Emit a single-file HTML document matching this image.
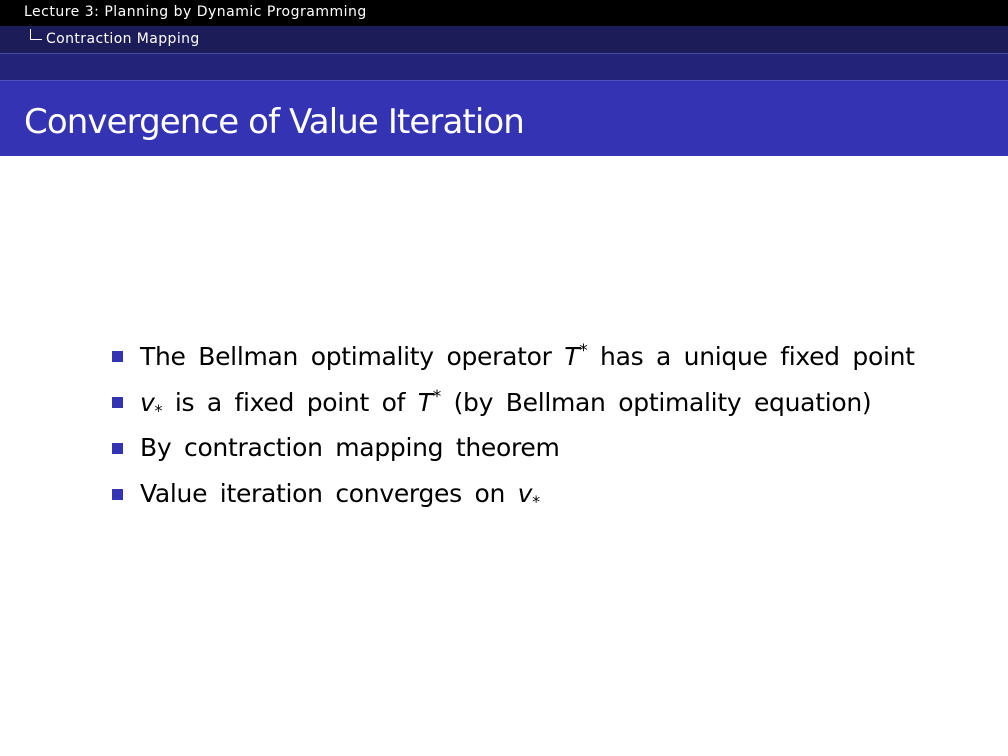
<!DOCTYPE html>
<html><head><style>
body{margin:0;width:1008px;height:756px;background:#fff;font-family:"DejaVu Sans","Liberation Sans",sans-serif;position:relative;overflow:hidden}
.a{position:absolute;left:0;width:1008px}
.t{position:absolute;white-space:nowrap}
.b{position:absolute;left:112px;width:11px;height:11px;background:#3333b3}
.l{position:absolute;left:140px;font-size:25px;color:#000;white-space:nowrap;letter-spacing:-0.3px;word-spacing:5px}
i{font-style:italic}
sup{font-size:17px;vertical-align:9px}
sub{font-size:16px;vertical-align:-5px}
</style></head><body>
<div class="a" style="top:0;height:26px;background:#000"></div>
<div class="a" style="top:26px;height:27px;background:#1c1c58"></div>
<div class="a" style="top:53px;height:1px;background:#4a4aa0"></div>
<div class="a" style="top:54px;height:26px;background:#23237a"></div>
<div class="a" style="top:80px;height:1px;background:#5050c0"></div>
<div class="a" style="top:81px;height:75px;background:#3333b3"></div>
<div class="t" style="left:24px;top:4px;font-size:14px;color:#fff;letter-spacing:0.5px">Lecture 3: Planning by Dynamic Programming</div>
<div style="position:absolute;left:30px;top:29px;width:11px;height:10px;border-left:1px solid #fff;border-bottom:1px solid #fff"></div>
<div class="t" style="left:46px;top:31px;font-size:14px;color:#fff;letter-spacing:0.4px">Contraction Mapping</div>
<div class="t" style="left:24px;top:102px;font-size:34px;color:#fff;letter-spacing:-0.9px">Convergence of Value Iteration</div>
<div class="b" style="top:351px"></div><div class="l" style="top:341px">The Bellman optimality operator <i>T</i><sup>*</sup> has a unique fixed point</div>
<div class="b" style="top:397px"></div><div class="l" style="top:387px"><i>v</i><sub>*</sub> is a fixed point of <i>T</i><sup>*</sup> (by Bellman optimality equation)</div>
<div class="b" style="top:443px"></div><div class="l" style="top:433px">By contraction mapping theorem</div>
<div class="b" style="top:489px"></div><div class="l" style="top:479px">Value iteration converges on <i>v</i><sub>*</sub></div>
</body></html>
